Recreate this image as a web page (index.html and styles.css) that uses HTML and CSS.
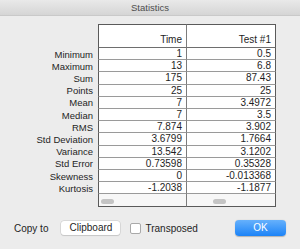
FILE: index.html
```html
<!DOCTYPE html>
<html lang="en">
<head>
    <meta charset="UTF-8">
    <title>Statistics</title>
    <link rel="stylesheet" href="styles.css">
</head>
<body>

<div class="window">
    <div class="titlebar">Statistics</div>

    <table class="stats">
        <thead>
            <tr><th class="label"></th><th class="first">Time</th><th class="last">Test #1</th></tr>
        </thead>
        <tbody>
            <tr><th class="label">Minimum</th><td class="first">1</td><td class="last">0.5</td></tr>
            <tr><th class="label">Maximum</th><td class="first">13</td><td class="last">6.8</td></tr>
            <tr><th class="label">Sum</th><td class="first">175</td><td class="last">87.43</td></tr>
            <tr><th class="label">Points</th><td class="first">25</td><td class="last">25</td></tr>
            <tr><th class="label">Mean</th><td class="first">7</td><td class="last">3.4972</td></tr>
            <tr><th class="label">Median</th><td class="first">7</td><td class="last">3.5</td></tr>
            <tr><th class="label">RMS</th><td class="first">7.874</td><td class="last">3.902</td></tr>
            <tr><th class="label">Std Deviation</th><td class="first">3.6799</td><td class="last">1.7664</td></tr>
            <tr><th class="label">Variance</th><td class="first">13.542</td><td class="last">3.1202</td></tr>
            <tr><th class="label">Std Error</th><td class="first">0.73598</td><td class="last">0.35328</td></tr>
            <tr><th class="label">Skewness</th><td class="first">0</td><td class="last">-0.013368</td></tr>
            <tr><th class="label">Kurtosis</th><td class="first">-1.2038</td><td class="last">-1.1877</td></tr>
            <tr class="scroll">
                <th class="label"></th>
                <td class="first"><span class="thumb thumb-left"></span></td>
                <td class="last"><span class="thumb thumb-mid"></span></td>
            </tr>
        </tbody>
    </table>

    <div class="footer">
        <span class="copy-label">Copy to</span>
        <button type="button" class="btn">Clipboard</button>
        <label class="check"><span class="box"></span>Transposed</label>
        <button type="button" class="btn ok">OK</button>
    </div>
</div>

</body>
</html>
```

FILE: styles.css
```css
body {
    margin: 0;
    font-family: "Liberation Sans", Arial, sans-serif;
    font-size: 10px;
    color: #1e1e1e;
}

.window {
    width: 300px;
    height: 249px;
    background-color: #ececec;
    overflow: hidden;
}

.titlebar {
    height: 15px;
    line-height: 15px;
    border-bottom: 1px solid #c9c9c9;
    background: linear-gradient(#e9e9e9, #d5d5d5);
    text-align: center;
    color: #4d4d4d;
    font-size: 9.5px;
}

.stats {
    margin-top: 8px;
    border-collapse: separate;
    border-spacing: 0;
    table-layout: fixed;
}

.stats th,
.stats td {
    padding: 0 4px 0 0;
    line-height: 11.2px;
    text-align: right;
    font-weight: normal;
    white-space: nowrap;
}

.stats td,
.stats thead th {
    background-color: white;
    border-right: 1px solid #7c7c7c;
    border-bottom: 1px solid #9a9a9a;
    width: 83px;
}

.stats .label {
    background: none;
    border: none;
    width: 93px;
    padding-right: 5px;
    font-size: 9.5px;
}

.stats .first {
    border-left: 1px solid #5a5a5a;
}

.stats .last {
    width: 84px;
    border-right: 1px solid #5a5a5a;
}

.stats thead th {
    border-top: 1px solid #5a5a5a;
    border-bottom-color: #6e6e6e;
    padding-top: 9px;
    padding-bottom: 1px;
    line-height: 12px;
    font-size: 10px;
}

.stats thead th.label {
    border: none;
}

.scroll td {
    height: 12px;
    line-height: 12px;
    background-color: #f7f7f7;
    border-bottom: 1px solid #5a5a5a;
    position: relative;
}

.thumb {
    position: absolute;
    top: 5px;
    width: 13px;
    height: 5px;
    border-radius: 3px;
    background-color: #c4c4c4;
}

.thumb-left {
    left: 2px;
}

.thumb-mid {
    left: 26px;
}

.footer {
    display: flex;
    align-items: center;
    margin-top: 13px;
    padding: 0 14px;
    height: 16px;
}

.copy-label {
    margin-right: 13px;
}

.btn {
    font-family: inherit;
    font-size: 10px;
    color: #1e1e1e;
    background-color: white;
    border: none;
    border-radius: 3px;
    box-shadow: 0 0 0 0.5px #c6c6c6, 0 1px 1px rgba(0, 0, 0, 0.15);
    height: 14px;
    width: 59px;
    padding: 0;
    line-height: 14px;
}

.check {
    display: flex;
    align-items: center;
    margin-left: 10px;
}

.box {
    width: 9px;
    height: 9px;
    margin-right: 4px;
    background-color: white;
    border: 1px solid #a9a9a9;
    border-radius: 2px;
}

.ok {
    margin-left: auto;
    width: 51px;
    height: 16px;
    line-height: 16px;
    color: white;
    border-radius: 4px;
    background: linear-gradient(#66b1fc, #1c83f7);
    box-shadow: 0 0.5px 1px rgba(0, 0, 0, 0.25);
}
```
